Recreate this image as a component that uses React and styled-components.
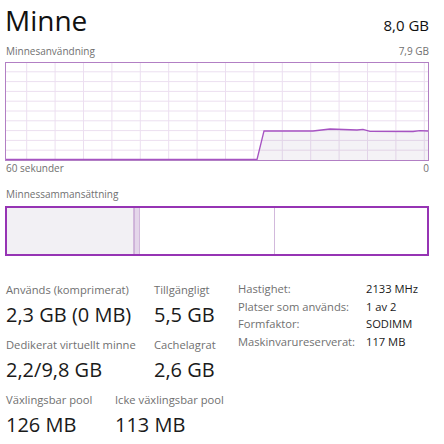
import React from 'react'
import styled, { createGlobalStyle } from 'styled-components'

const GlobalStyle = createGlobalStyle`
  html, body {
    margin: 0;
    padding: 0;
    background: #ffffff;
  }
  body {
    font-family: 'Open Sans', 'Noto Sans', 'Liberation Sans', sans-serif;
    color: #1a1a1a;
  }
`

const gridX = Array.from({ length: 15 }, (_, i) => 21.7 + i * 28.4).filter((x) => x < 423)
const gridY = Array.from({ length: 9 }, (_, i) => 9.8 * (i + 1))
const usage = [
  [0, 97.5], [252, 97.5], [259, 69], [308, 69], [325, 67], [352, 68],
  [358, 67.3], [365, 69.3], [408, 69.5], [415, 68.7], [423, 69]
]

// first column width differs on the last row, like in Task Manager
const leftStats = [
  {
    col: 148,
    items: [
      { label: 'Används (komprimerat)', value: '2,3 GB (0 MB)' },
      { label: 'Tillgängligt', value: '5,5 GB' }
    ]
  },
  {
    col: 148,
    items: [
      { label: 'Dedikerat virtuellt minne', value: '2,2/9,8 GB' },
      { label: 'Cachelagrat', value: '2,6 GB' }
    ]
  },
  {
    col: 109,
    items: [
      { label: 'Växlingsbar pool', value: '126 MB' },
      { label: 'Icke växlingsbar pool', value: '113 MB' }
    ]
  }
]

const details = [
  ['Hastighet:', '2133 MHz'],
  ['Platser som används:', '1 av 2'],
  ['Formfaktor:', 'SODIMM'],
  ['Maskinvarureserverat:', '117 MB']
]

export default function App () {
  const line = usage.map(([x, y]) => `${x},${y}`).join(' ')
  const area = `${line} 423,98 0,98`

  return (
    <>
      <GlobalStyle />
      <Panel>
        <Header>
          <Title>Minne</Title>
          <Total>8,0 GB</Total>
        </Header>
        <CaptionRow>
          <span>Minnesanvändning</span>
          <span>7,9 GB</span>
        </CaptionRow>
        <Graph viewBox="0 0 424 99" width="424" height="99">
          {gridX.map((x) => (
            <line key={`v${x}`} x1={x} y1="0" x2={x} y2="99" stroke="#ecdff0" strokeWidth="1" />
          ))}
          {gridY.map((y) => (
            <line key={`h${y}`} x1="0" y1={y} x2="424" y2={y} stroke="#ecdff0" strokeWidth="1" />
          ))}
          <polygon points={area} fill="rgba(120, 90, 140, 0.08)" />
          <polyline points={line} fill="none" stroke="#a653c2" strokeWidth="1.3" />
          <rect x="0.5" y="0.5" width="423" height="98" fill="none" stroke="#b27fc4" strokeWidth="1" />
        </Graph>
        <AxisRow>
          <span>60 sekunder</span>
          <span>0</span>
        </AxisRow>
        <CompositionCaption>Minnessammansättning</CompositionCaption>
        <Composition>
          <Segment $width={126} $fill="#f2f0f4" />
          <Segment $width={4} $fill="#e4d6ea" $edge />
          <Segment $width={134} $fill="#ffffff" />
          <Segment $fill="#ffffff" $last />
        </Composition>
        <Stats>
          <StatBlock>
            {leftStats.map((row, i) => (
              <StatRow key={i} $col={row.col}>
                {row.items.map((s) => (
                  <Stat key={s.label}>
                    <StatLabel>{s.label}</StatLabel>
                    <StatValue>{s.value}</StatValue>
                  </Stat>
                ))}
              </StatRow>
            ))}
          </StatBlock>
          <Details>
            {details.map(([k, v]) => (
              <React.Fragment key={k}>
                <DetailKey>{k}</DetailKey>
                <DetailValue>{v}</DetailValue>
              </React.Fragment>
            ))}
          </Details>
        </Stats>
      </Panel>
    </>
  )
}

const Panel = styled.div`
  width: 444px;
  height: 444px;
  box-sizing: border-box;
  padding: 0 15px 0 5px;
  overflow: hidden;
`
const Header = styled.div`
  display: flex;
  justify-content: space-between;
  align-items: baseline;
  height: 42px;
`
const Title = styled.h1`
  margin: 0;
  font-size: 28px;
  font-weight: 400;
  line-height: 40px;
  color: #111;
`
const Total = styled.span`
  font-size: 15px;
  color: #111;
`
const CaptionRow = styled.div`
  display: flex;
  justify-content: space-between;
  font-size: 10px;
  line-height: 19px;
  color: #707070;
  padding-left: 1px;
`
const Graph = styled.svg`
  display: block;
  margin-top: 1px;
`
const AxisRow = styled(CaptionRow)`
  line-height: 15px;
`
const CompositionCaption = styled.div`
  margin-top: 10px;
  font-size: 10px;
  line-height: 16px;
  color: #707070;
  padding-left: 1px;
`
const Composition = styled.div`
  display: flex;
  margin-top: 4px;
  height: 50px;
  box-sizing: border-box;
  border: 2px solid #9634b4;
`
const Segment = styled.div`
  flex: ${(p) => (p.$width ? `0 0 ${p.$width}px` : '1 1 auto')};
  background: ${(p) => p.$fill};
  border-left: ${(p) => (p.$edge ? '1px solid #cdb2d8' : 'none')};
  border-right: ${(p) => (p.$last ? 'none' : '1px solid #d2b9dc')};
`
const Stats = styled.div`
  display: grid;
  grid-template-columns: 232px auto;
  margin-top: 24px;
  padding-left: 1px;
`
const StatBlock = styled.div`
  display: flex;
  flex-direction: column;
  gap: 6px;
`
const StatRow = styled.div`
  display: grid;
  grid-template-columns: ${(p) => p.$col}px auto;
  white-space: nowrap;
`
const Stat = styled.div`
  display: flex;
  flex-direction: column;
`
const StatLabel = styled.span`
  font-size: 11.2px;
  line-height: 20px;
  color: #707070;
`
const StatValue = styled.span`
  font-size: 20px;
  line-height: 29px;
  color: #1a1a1a;
`
const Details = styled.div`
  display: grid;
  grid-template-columns: 128px auto;
  grid-auto-rows: 17.6px;
  align-content: start;
  font-size: 11.2px;
  line-height: 17.6px;
`
const DetailKey = styled.span`
  color: #707070;
  white-space: nowrap;
`
const DetailValue = styled.span`
  color: #1a1a1a;
  white-space: nowrap;
`
